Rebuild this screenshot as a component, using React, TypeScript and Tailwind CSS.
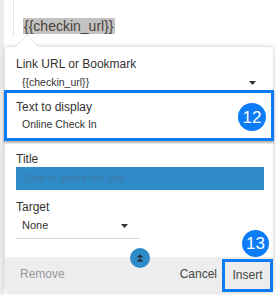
const Caret = ({ className = "" }: { className?: string }) => (
  <svg width="7" height="4" viewBox="0 0 7 4" className={className}>
    <path d="M0 0h7L3.5 4z" fill="#333" />
  </svg>
);

const Badge = ({ n, className }: { n: string; className: string }) => (
  <div
    className={`absolute flex items-center justify-center rounded-full bg-[#0b7cf6] text-white text-[17px] leading-none ${className}`}
  >
    {n}
  </div>
);

export default function App() {
  return (
    <div className="relative w-[276px] h-[295px] overflow-hidden bg-white font-['Liberation_Sans',Arial,sans-serif] text-[#333]">
      {/* editor edge */}
      <div className="absolute left-0 top-0 h-full w-[4px] bg-[#ececec]" />
      <div className="absolute left-[13px] top-0 h-[36px] w-px bg-[#e6e6e6]" />

      {/* selected text in the editor */}
      <div className="h-[47px] pl-[23px] pt-[14px]">
        <span className="bg-[#c2c2c2] px-px text-[14px] leading-[18px] text-[#4a4038]">
          {"{{checkin_url}}"}
        </span>
      </div>

      {/* link popover */}
      <div className="relative ml-[5px] w-[268px] h-[245px] rounded-[4px] bg-white shadow-[0_0_4px_rgba(0,0,0,0.25)] flex flex-col">
        <svg width="26" height="14" viewBox="0 0 26 14" className="absolute left-[9px] -top-[13px]">
          <path d="M0 14L13 1l13 13z" fill="#fff" stroke="#e2e2e2" />
          <rect x="0" y="13" width="26" height="2" fill="#fff" />
        </svg>

        <div className="h-[43px] pl-[11px] pt-[10px]">
          <div className="text-[12px] leading-[14px]">Link URL or Bookmark</div>
          <div className="mt-[5px] flex items-center justify-between pl-[6px] pr-[17px] text-[10.5px] leading-[13px]">
            <span>{"{{checkin_url}}"}</span>
            <Caret />
          </div>
        </div>

        <div className="relative -mx-[1px] h-[51px] border-[3px] border-[#0b7cf6] bg-white pl-[9px] pt-[7px] shadow-[0_2px_2px_rgba(0,0,0,0.3)]">
          <div className="text-[12px] leading-[14px]">Text to display</div>
          <div className="mt-[4px] pl-[6px] text-[10.5px] leading-[13px]">Online Check In</div>
          <Badge n="12" className="right-[5px] top-[10px] w-[28px] h-[28px]" />
        </div>

        <div className="pl-[11px] pt-[12px]">
          <div className="text-[12px] leading-[13px]">Title</div>
          <div className="mt-px w-[248px] h-[23px] bg-[#2e8bc8] pl-[7px] text-[10.5px] leading-[23px] text-[#3f7aa6]">
            Type or paste link title
          </div>
        </div>

        <div className="pl-[11px] pt-[10px]">
          <div className="text-[12px] leading-[14px]">Target</div>
          <div className="mt-[5px] flex w-[124px] items-center justify-between border-b border-[#d9d9d9] pb-[6px] pl-[6px] pr-[12px] text-[11px] leading-[13px]">
            <span>None</span>
            <Caret />
          </div>
        </div>

        <div className="flex-1" />

        <div className="flex h-[35px] items-end rounded-b-[4px] bg-[#ededed] pl-[15px]">
          <span className="mb-[9px] text-[12px] text-[#9a9a9a]">Remove</span>
          <span className="mb-[9px] ml-auto mr-[5px] text-[12px] text-[#444]">Cancel</span>
          <div className="flex h-[33px] w-[51px] items-center justify-center border-[3px] border-[#0b7cf6] pb-[2px] text-[12px] text-[#444]">
            Insert
          </div>
        </div>

        {/* collapse toggle */}
        <div className="absolute left-[125px] top-[201px] flex h-[20px] w-[20px] items-center justify-center rounded-full bg-[#2e8bc8]">
          <svg width="8" height="8" viewBox="0 0 8 8">
            <path d="M4 0.5L7.5 3.5h-7zM4 4.5l3.5 3h-7z" fill="#2a2a2a" />
          </svg>
        </div>
      </div>

      <Badge n="13" className="left-[242px] top-[230px] w-[27px] h-[27px]" />
    </div>
  );
}
